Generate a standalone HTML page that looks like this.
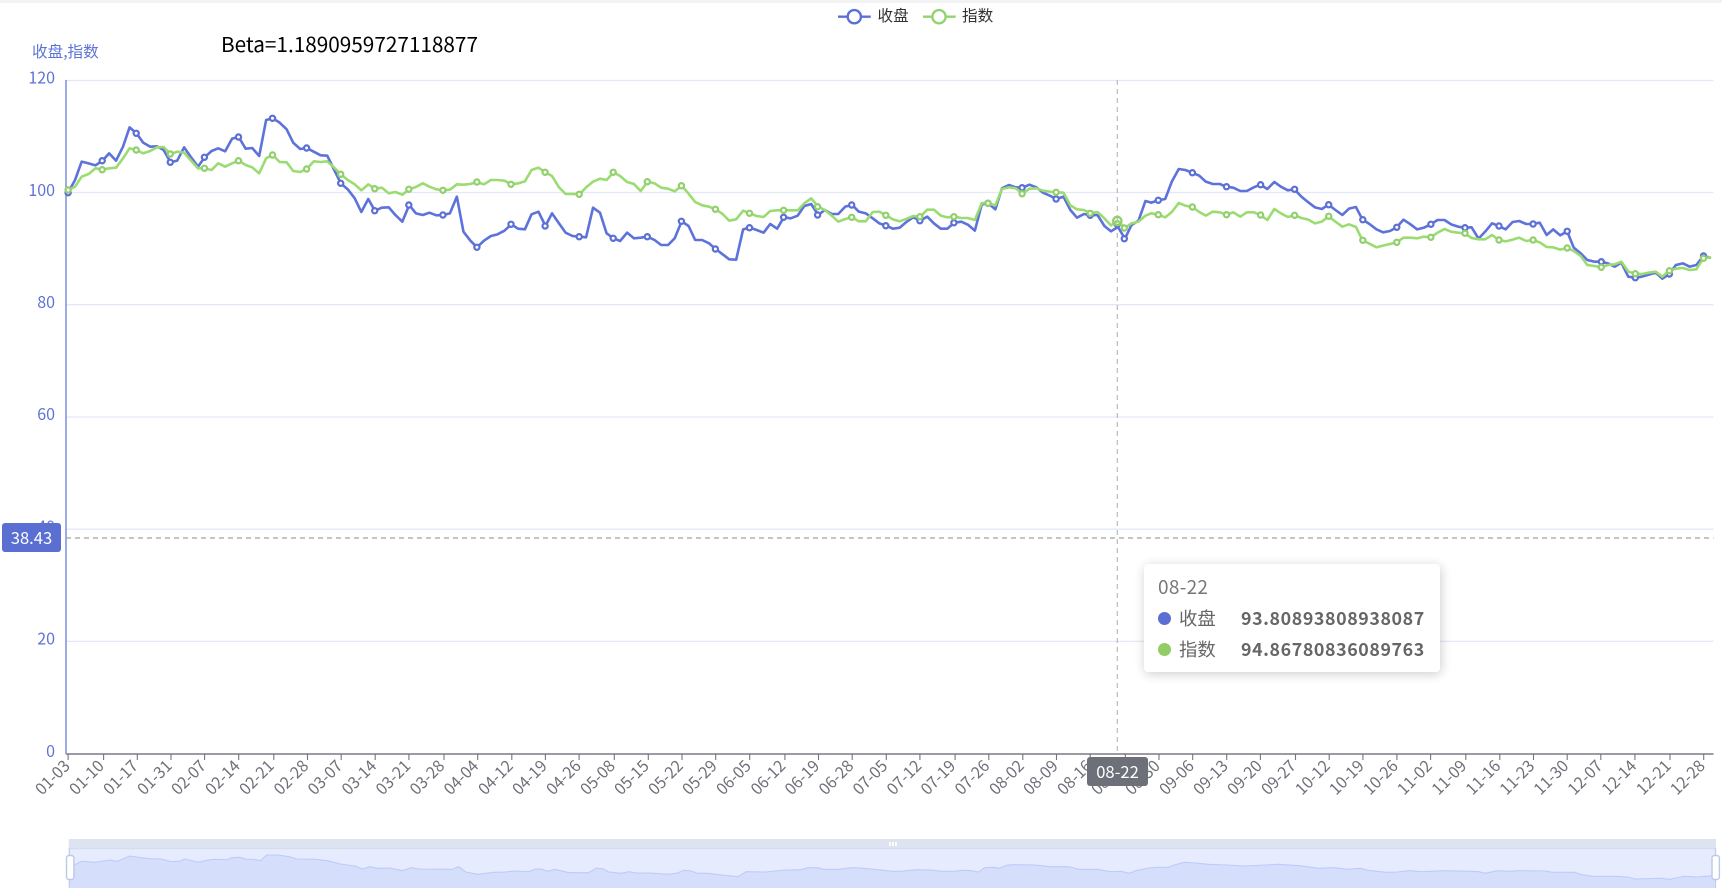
<!DOCTYPE html>
<html lang="zh">
<head>
<meta charset="utf-8">
<title>Beta</title>
<style>
html,body{margin:0;padding:0;background:#fff;}
body{width:1722px;height:888px;overflow:hidden;position:relative;font-family:"Liberation Sans","Noto Sans CJK SC",sans-serif;}
#w{position:absolute;left:0;top:0;width:1722px;height:888px;overflow:hidden;background:#fff;filter:blur(.35px);}
.n{font-family:"Noto Sans CJK SC","Liberation Sans",sans-serif;}
#top{position:absolute;left:0;top:0;width:1722px;height:3px;background:#f3f3f3;}
#beta{position:absolute;left:221px;top:28px;font-size:20.75px;line-height:30px;color:#000;white-space:nowrap;}
svg{position:absolute;left:0;top:0;}
text{font-family:"Noto Sans CJK SC","Liberation Sans",sans-serif;}
.ln{fill:none;stroke-width:2.6;stroke-linejoin:round;stroke-linecap:round;vector-effect:non-scaling-stroke;}
#tip{position:absolute;left:1144px;top:564px;width:296px;height:108px;background:#fff;border-radius:4px;box-shadow:1px 2px 11px rgba(0,0,0,.2);color:#666;}
#tip div{position:absolute;white-space:nowrap;}
.dot{width:13px;height:13px;border-radius:50%;left:14px;}
.nm{left:35px;font-size:18.4px;line-height:26px;}
.vl{left:97px;font-size:17.8px;line-height:26px;font-weight:700;color:#666;font-family:"Noto Sans CJK SC",sans-serif;letter-spacing:.6px;}
.box{position:absolute;color:#fff;text-align:center;font-size:16.6px;}
</style>
</head>
<body>
<div id="w">
<div id="top"></div>
<svg width="1722" height="888" viewBox="0 0 1722 888" xmlns="http://www.w3.org/2000/svg">
  <!-- grid -->
  <g stroke="#e3e8f7" stroke-width="1.3">
    <line x1="66" x2="1713.5" y1="80.5" y2="80.5"/>
    <line x1="66" x2="1713.5" y1="192.5" y2="192.5"/>
    <line x1="66" x2="1713.5" y1="304.7" y2="304.7"/>
    <line x1="66" x2="1713.5" y1="417" y2="417"/>
    <line x1="66" x2="1713.5" y1="529.2" y2="529.2"/>
    <line x1="66" x2="1713.5" y1="641.4" y2="641.4"/>
  </g>
  <!-- y labels -->
  <g fill="#5e73d6" font-size="16" text-anchor="end">
    <text x="55" y="83.6">120</text>
    <text x="55" y="195.8">100</text>
    <text x="55" y="308">80</text>
    <text x="55" y="420.2">60</text>
    <text x="55" y="532.4">40</text>
    <text x="55" y="644.6">20</text>
    <text x="55" y="756.8">0</text>
    <text x="32" y="57" text-anchor="start" font-size="15.6">收盘,指数</text>
  </g>
  <line x1="66" x2="66" y1="80" y2="754" stroke="#5e73d6" stroke-width="1.2"/>
  <!-- crosshair lines -->
  <line x1="1117.3" x2="1117.3" y1="80" y2="754" stroke="#b9b9c2" stroke-width="1.2" stroke-dasharray="5 4"/>
  <line x1="66" x2="1713.5" y1="538" y2="538" stroke="#a0a0a0" stroke-width="1.2" stroke-dasharray="5 4"/>

  <!-- blue line -->
  <g stroke="#5d72da">
    <polyline class="ln" transform="matrix(.36607 0 0 .33333 0 0)" points="186,578 205,540 223,485 242,490 261,496 280,482 298,460 317,482 336,440 354,382 373,400 391,428 410,440 429,439 447,450 466,487 484,482 503,442 522,472 541,500 559,472 578,453 596,445 615,454 634,416 652,411 671,446 689,444 708,468 727,360 745,355 764,368 783,388 801,428 820,447 838,444 857,455 876,466 894,467 913,510 931,550 950,568 969,595 987,636 1006,597 1024,632 1043,623 1062,622 1080,645 1099,665 1118,615 1136,640 1155,645 1173,638 1192,646 1210,645 1229,640 1248,590 1266,695 1285,722 1303,742 1322,722 1341,708 1359,703 1378,692 1397,673 1415,686 1434,688 1452,643 1471,635 1490,678 1508,640 1527,670 1545,698 1564,708 1583,710"/>
    <polyline class="ln" transform="matrix(.36607 0 0 .33333 574 0)" points="15,710 33,712 52,623 71,638 89,700 108,715 126,723 145,698 164,715 182,713 201,710 220,720 238,735 257,735 275,715 294,664 313,678 331,720 350,720 369,730 387,747 406,763 424,778 443,779 462,688 480,683 499,690 518,698 536,672 555,686 573,652 592,655 611,647 629,618 648,612 667,645 685,630 704,642 722,642 741,620 760,615 778,635 797,640 816,655 834,670 853,677 871,686 890,683 909,665 927,652 946,662 965,650 983,670 1002,686 1020,686 1039,668 1058,665 1076,674 1095,692 1114,613 1132,610 1151,628 1169,565 1188,555 1207,562 1225,563 1244,554 1263,562 1281,578 1300,587 1318,597 1337,590 1356,630 1374,653 1393,642 1412,646 1430,645 1449,678 1467,694 1486,681 1505,716 1523,675 1542,662 1561,603 1577,608"/>
    <polyline class="ln" transform="matrix(.36607 0 0 .33333 1148 0)" points="9,608 28,601 47,597 65,545 84,507 102,510 121,518 140,527 158,545 177,552 196,552 214,560 233,563 252,573 270,573 289,562 307,554 326,567 345,546 363,560 382,571 400,568 419,590 438,607 456,622 475,627 493,614 512,630 531,645 549,626 568,621 586,659 605,672 624,688 642,697 661,693 679,682 698,659 717,673 735,688 754,683 772,673 791,660 810,660 828,673 847,680 865,683 884,682 903,716 921,695 940,670 958,678 977,688 996,666 1014,663 1033,672 1051,672 1070,668 1089,705 1107,688 1126,706 1145,694 1163,743 1182,760 1200,780 1219,785 1238,785 1256,790 1275,800 1293,788 1312,830 1331,833 1349,830 1368,824 1387,818 1405,836 1424,822 1442,795 1461,790 1480,800 1498,795 1517,768 1535,773"/>
  </g>
  <!-- blue markers -->
  <g fill="#fff" stroke="#5b6fd4" stroke-width="2.2">
    <circle cx="68.1" cy="192.7" r="2.6"/><circle cx="102.2" cy="160.7" r="2.6"/><circle cx="136.2" cy="133.3" r="2.6"/><circle cx="170.3" cy="162.3" r="2.6"/><circle cx="204.4" cy="157.3" r="2.6"/><circle cx="238.5" cy="137" r="2.6"/><circle cx="272.5" cy="118.3" r="2.6"/><circle cx="306.6" cy="148" r="2.6"/><circle cx="340.7" cy="183.3" r="2.6"/><circle cx="374.7" cy="210.7" r="2.6"/><circle cx="408.8" cy="205" r="2.6"/><circle cx="442.9" cy="215" r="2.6"/><circle cx="476.9" cy="247.3" r="2.6"/><circle cx="511" cy="224.3" r="2.6"/><circle cx="545.1" cy="226" r="2.6"/><circle cx="579.2" cy="236.7" r="2.6"/><circle cx="613.2" cy="238.3" r="2.6"/><circle cx="647.3" cy="236.7" r="2.6"/><circle cx="681.4" cy="221.3" r="2.6"/><circle cx="715.4" cy="249" r="2.6"/><circle cx="749.5" cy="227.7" r="2.6"/><circle cx="783.6" cy="217.3" r="2.6"/><circle cx="817.6" cy="215" r="2.6"/><circle cx="851.7" cy="205" r="2.6"/><circle cx="885.8" cy="225.7" r="2.6"/><circle cx="919.9" cy="220.7" r="2.6"/><circle cx="953.9" cy="222.7" r="2.6"/><circle cx="988" cy="203.3" r="2.6"/><circle cx="1022.1" cy="187.7" r="2.6"/><circle cx="1056.1" cy="199" r="2.6"/><circle cx="1090.2" cy="215.3" r="2.6"/><circle cx="1124.3" cy="238.7" r="2.6"/><circle cx="1158.3" cy="200.3" r="2.6"/><circle cx="1192.4" cy="172.7" r="2.6"/><circle cx="1226.5" cy="186.7" r="2.6"/><circle cx="1260.6" cy="184.7" r="2.6"/><circle cx="1294.6" cy="189.3" r="2.6"/><circle cx="1328.7" cy="204.7" r="2.6"/><circle cx="1362.8" cy="219.7" r="2.6"/><circle cx="1396.8" cy="227.3" r="2.6"/><circle cx="1430.9" cy="224.3" r="2.6"/><circle cx="1465" cy="227.7" r="2.6"/><circle cx="1499" cy="226" r="2.6"/><circle cx="1533.1" cy="224" r="2.6"/><circle cx="1567.2" cy="231.3" r="2.6"/><circle cx="1601.3" cy="261.7" r="2.6"/><circle cx="1635.3" cy="277.7" r="2.6"/><circle cx="1669.4" cy="274" r="2.6"/><circle cx="1703.5" cy="256" r="2.6"/>
    <circle cx="1117.3" cy="224" r="2.8" fill="none"/>
  </g>

  <!-- green line -->
  <g stroke="#9bdc72">
    <polyline class="ln" transform="matrix(.36607 0 0 .33333 0 0)" points="186,570 205,560 223,530 242,522 261,505 280,509 298,505 317,503 336,475 354,445 373,450 391,460 410,453 429,442 447,441 466,462 484,455 503,458 522,482 541,505 559,505 578,510 596,490 615,500 634,490 652,482 671,495 689,502 708,520 727,475 745,465 764,486 783,487 801,513 820,516 838,507 857,484 876,486 894,484 913,503 931,523 950,540 969,553 987,571 1006,553 1024,566 1043,563 1062,580 1080,576 1099,584 1118,568 1136,561 1155,550 1173,560 1192,568 1210,571 1229,569 1248,553 1266,554 1285,552 1303,546 1322,553 1341,540 1359,540 1378,542 1397,553 1415,550 1434,544 1452,510 1471,503 1490,517 1508,528 1527,562 1545,582 1564,582 1583,583"/>
    <polyline class="ln" transform="matrix(.36607 0 0 .33333 574 0)" points="15,583 33,562 52,545 71,536 89,540 108,517 126,528 145,546 164,552 182,573 201,545 220,550 238,563 257,566 275,574 294,557 313,581 331,606 350,616 369,620 387,628 406,642 424,662 443,658 462,632 480,640 499,648 518,651 536,633 555,631 573,631 592,631 611,631 629,610 648,595 667,620 685,630 704,647 722,665 741,657 760,652 778,664 797,664 816,636 834,635 853,646 871,658 890,664 909,656 927,648 946,650 965,629 983,629 1002,647 1020,652 1039,650 1058,654 1076,654 1095,660 1114,609 1132,610 1151,616 1169,567 1188,562 1207,565 1225,581 1244,566 1263,565 1281,572 1300,575 1318,577 1337,578 1356,616 1374,628 1393,630 1412,640 1430,636 1449,655 1467,676 1486,663 1505,684 1523,670 1542,665 1561,647 1577,640"/>
    <polyline class="ln" transform="matrix(.36607 0 0 .33333 1148 0)" points="9,640 28,644 47,652 65,636 84,609 102,617 121,621 140,636 158,647 177,635 196,637 214,644 233,637 252,650 270,637 289,637 307,645 326,660 345,627 363,640 382,651 400,646 419,654 438,659 456,670 475,665 493,649 512,665 531,680 549,673 568,681 586,721 605,731 624,742 642,737 661,732 679,727 698,713 717,713 735,715 754,710 772,712 791,698 810,687 828,695 847,698 865,700 884,714 903,718 921,718 940,705 958,720 977,724 996,719 1014,713 1033,723 1051,720 1070,727 1089,741 1107,742 1126,749 1145,744 1163,753 1182,768 1200,795 1219,798 1238,802 1256,795 1275,793 1293,785 1312,815 1331,821 1349,822 1368,818 1387,815 1405,830 1424,812 1442,806 1461,804 1480,810 1498,808 1517,775 1535,772"/>
  </g>
  <!-- green markers -->
  <g fill="#fff" stroke="#91cf6e" stroke-width="2.2">
    <circle cx="68.1" cy="190" r="2.6"/><circle cx="102.2" cy="169.7" r="2.6"/><circle cx="136.2" cy="150" r="2.6"/><circle cx="170.3" cy="154" r="2.6"/><circle cx="204.4" cy="168.3" r="2.6"/><circle cx="238.5" cy="160.7" r="2.6"/><circle cx="272.5" cy="155" r="2.6"/><circle cx="306.6" cy="169" r="2.6"/><circle cx="340.7" cy="174.3" r="2.6"/><circle cx="374.7" cy="188.7" r="2.6"/><circle cx="408.8" cy="189.3" r="2.6"/><circle cx="442.9" cy="190.3" r="2.6"/><circle cx="476.9" cy="182" r="2.6"/><circle cx="511" cy="184.3" r="2.6"/><circle cx="545.1" cy="172.3" r="2.6"/><circle cx="579.2" cy="194.3" r="2.6"/><circle cx="613.2" cy="172.3" r="2.6"/><circle cx="647.3" cy="181.7" r="2.6"/><circle cx="681.4" cy="185.7" r="2.6"/><circle cx="715.4" cy="209.3" r="2.6"/><circle cx="749.5" cy="213.3" r="2.6"/><circle cx="783.6" cy="210.3" r="2.6"/><circle cx="817.6" cy="206.7" r="2.6"/><circle cx="851.7" cy="217.3" r="2.6"/><circle cx="885.8" cy="215.3" r="2.6"/><circle cx="919.9" cy="216.7" r="2.6"/><circle cx="953.9" cy="216.7" r="2.6"/><circle cx="988" cy="203.3" r="2.6"/><circle cx="1022.1" cy="193.7" r="2.6"/><circle cx="1056.1" cy="192.3" r="2.6"/><circle cx="1090.2" cy="213.3" r="2.6"/><circle cx="1124.3" cy="228" r="2.6"/><circle cx="1158.3" cy="214.7" r="2.6"/><circle cx="1192.4" cy="207" r="2.6"/><circle cx="1226.5" cy="214.7" r="2.6"/><circle cx="1260.6" cy="215" r="2.6"/><circle cx="1294.6" cy="215.3" r="2.6"/><circle cx="1328.7" cy="216.3" r="2.6"/><circle cx="1362.8" cy="240.3" r="2.6"/><circle cx="1396.8" cy="242.3" r="2.6"/><circle cx="1430.9" cy="237.3" r="2.6"/><circle cx="1465" cy="233.3" r="2.6"/><circle cx="1499" cy="240" r="2.6"/><circle cx="1533.1" cy="240" r="2.6"/><circle cx="1567.2" cy="248" r="2.6"/><circle cx="1601.3" cy="267.3" r="2.6"/><circle cx="1635.3" cy="273.7" r="2.6"/><circle cx="1669.4" cy="270.7" r="2.6"/><circle cx="1703.5" cy="258.3" r="2.6"/>
    <circle cx="1117.3" cy="221" r="4.2" fill="none" stroke-width="2.3"/>
  </g>

  <!-- x axis -->
  <line x1="66" x2="1713.5" y1="754" y2="754" stroke="#8e8c97" stroke-width="1.7"/>
  <path stroke="#75757e" stroke-width="1.1" fill="none" d="M68.1 754v6M103.6 754v6M137.3 754v6M171 754v6M204.6 754v6M238.7 754v6M273.8 754v6M307.5 754v6M341.2 754v6M375.2 754v6M408.9 754v6M444 754v6M477.7 754v6M511.8 754v6M545.4 754v6M579.1 754v6M614.3 754v6M648.3 754v6M682 754v6M715.7 754v6M749.7 754v6M784.9 754v6M818.5 754v6M852.2 754v6M886.3 754v6M919.9 754v6M955.1 754v6M988.8 754v6M1022.8 754v6M1056.5 754v6M1090.2 754v6M1125.3 754v6M1159 754v6M1192.7 754v6M1226.7 754v6M1260.4 754v6M1295.5 754v6M1329.2 754v6M1362.9 754v6M1396.9 754v6M1430.6 754v6M1465.8 754v6M1499.8 754v6M1533.5 754v6M1567.2 754v6M1600.8 754v6M1634.9 754v6M1670 754v6M1703.7 754v6"/>
  <g fill="#6e7079" font-size="15.9" text-anchor="end">
    <text transform="translate(71,767) rotate(-45)">01-03</text>
    <text transform="translate(105,767) rotate(-45)">01-10</text>
    <text transform="translate(139,767) rotate(-45)">01-17</text>
    <text transform="translate(173,767) rotate(-45)">01-31</text>
    <text transform="translate(207,767) rotate(-45)">02-07</text>
    <text transform="translate(241,767) rotate(-45)">02-14</text>
    <text transform="translate(275,767) rotate(-45)">02-21</text>
    <text transform="translate(309.5,767) rotate(-45)">02-28</text>
    <text transform="translate(343.5,767) rotate(-45)">03-07</text>
    <text transform="translate(377.5,767) rotate(-45)">03-14</text>
    <text transform="translate(411.5,767) rotate(-45)">03-21</text>
    <text transform="translate(445.5,767) rotate(-45)">03-28</text>
    <text transform="translate(479.5,767) rotate(-45)">04-04</text>
    <text transform="translate(514,767) rotate(-45)">04-12</text>
    <text transform="translate(548,767) rotate(-45)">04-19</text>
    <text transform="translate(582,767) rotate(-45)">04-26</text>
    <text transform="translate(616,767) rotate(-45)">05-08</text>
    <text transform="translate(650,767) rotate(-45)">05-15</text>
    <text transform="translate(684,767) rotate(-45)">05-22</text>
    <text transform="translate(718,767) rotate(-45)">05-29</text>
    <text transform="translate(752,767) rotate(-45)">06-05</text>
    <text transform="translate(786.5,767) rotate(-45)">06-12</text>
    <text transform="translate(820.5,767) rotate(-45)">06-19</text>
    <text transform="translate(854.5,767) rotate(-45)">06-28</text>
    <text transform="translate(888.5,767) rotate(-45)">07-05</text>
    <text transform="translate(922.5,767) rotate(-45)">07-12</text>
    <text transform="translate(956.5,767) rotate(-45)">07-19</text>
    <text transform="translate(990.5,767) rotate(-45)">07-26</text>
    <text transform="translate(1025,767) rotate(-45)">08-02</text>
    <text transform="translate(1059,767) rotate(-45)">08-09</text>
    <text transform="translate(1093,767) rotate(-45)">08-16</text>
    <text transform="translate(1127,767) rotate(-45)">08-23</text>
    <text transform="translate(1161,767) rotate(-45)">08-30</text>
    <text transform="translate(1195,767) rotate(-45)">09-06</text>
    <text transform="translate(1229,767) rotate(-45)">09-13</text>
    <text transform="translate(1263,767) rotate(-45)">09-20</text>
    <text transform="translate(1297,767) rotate(-45)">09-27</text>
    <text transform="translate(1331,767) rotate(-45)">10-12</text>
    <text transform="translate(1365,767) rotate(-45)">10-19</text>
    <text transform="translate(1399,767) rotate(-45)">10-26</text>
    <text transform="translate(1433,767) rotate(-45)">11-02</text>
    <text transform="translate(1467.5,767) rotate(-45)">11-09</text>
    <text transform="translate(1501.5,767) rotate(-45)">11-16</text>
    <text transform="translate(1535.5,767) rotate(-45)">11-23</text>
    <text transform="translate(1569.5,767) rotate(-45)">11-30</text>
    <text transform="translate(1603.5,767) rotate(-45)">12-07</text>
    <text transform="translate(1637.5,767) rotate(-45)">12-14</text>
    <text transform="translate(1672,767) rotate(-45)">12-21</text>
    <text transform="translate(1706,767) rotate(-45)">12-28</text>
  </g>

  <!-- legend -->
  <g fill="#fff" stroke-width="2.4">
    <line x1="838" x2="870.7" y1="16.7" y2="16.7" stroke="#5b6fd4"/>
    <circle cx="854.3" cy="16.7" r="6.6" stroke="#5b6fd4"/>
    <line x1="923" x2="955.7" y1="16.7" y2="16.7" stroke="#91d46e"/>
    <circle cx="939" cy="16.7" r="6.6" stroke="#91d46e"/>
  </g>
  <g fill="#333" font-size="15.6">
    <text x="877.5" y="21">收盘</text>
    <text x="962" y="21">指数</text>
  </g>

  <!-- data zoom -->
  <rect x="68.8" y="839" width="1647.2" height="49" fill="#e6ecfd"/>
  <rect x="68.8" y="839" width="1647.2" height="9.6" fill="#dee3f1"/>
  <line x1="68.8" x2="1716" y1="848.7" y2="848.7" stroke="#d3d9ea" stroke-width="1"/>
  <g fill="#d5dffc" stroke="none">
    <polygon transform="matrix(.36607 0 0 .33333 0 740)" points="190,444 190,378 202,375 223,364 262,367 300,360 320,364 355,348 385,353 410,356 440,357 468,365 490,364 505,357 542,367 560,362 582,358 620,359 635,353 655,352 672,358 692,358 712,362 728,345 760,345 790,350 810,357 860,358 895,362 930,372 970,378 990,387 1010,380 1030,385 1065,384 1100,392 1122,383 1145,387 1235,388 1253,380 1272,396 1305,403 1350,397 1380,396 1405,393 1445,395 1460,388 1478,387 1497,394 1515,388 1550,397 1570,398 1570,444"/>
    <polygon transform="matrix(.36607 0 0 .33333 574 740)" points="0,444 0,398 40,398 60,385 78,386 95,396 130,400 150,395 170,399 210,399 255,403 280,400 300,391 320,393 338,400 365,400 410,406 448,410 470,395 520,396 580,390 620,389 640,383 665,383 680,388 725,388 760,383 780,384 820,388 870,394 895,394 935,389 975,390 1005,394 1040,394 1060,391 1085,392 1105,396 1122,383 1145,382 1162,385 1180,376 1200,374 1262,375 1300,380 1350,380 1380,388 1430,388 1465,395 1495,394 1515,400 1535,392 1570,384 1570,444"/>
    <polygon transform="matrix(.36607 0 0 .33333 1148 740)" points="0,444 0,384 25,382 55,382 75,374 100,367 130,369 165,373 215,375 260,378 320,375 355,373 415,377 465,385 510,383 545,388 580,385 600,391 650,397 680,396 715,392 750,395 810,392 880,394 905,395 920,400 955,392 990,394 1015,392 1085,393 1105,397 1165,397 1185,404 1215,409 1270,409 1310,411 1330,417 1400,415 1425,418 1465,409 1500,411 1548,407 1548,444"/>
  </g>
  <g fill="none" stroke="#bccbfa" stroke-width="1.1" stroke-linejoin="round">
    <polyline vector-effect="non-scaling-stroke" transform="matrix(.36607 0 0 .33333 0 740)" points="190,378 202,375 223,364 262,367 300,360 320,364 355,348 385,353 410,356 440,357 468,365 490,364 505,357 542,367 560,362 582,358 620,359 635,353 655,352 672,358 692,358 712,362 728,345 760,345 790,350 810,357 860,358 895,362 930,372 970,378 990,387 1010,380 1030,385 1065,384 1100,392 1122,383 1145,387 1235,388 1253,380 1272,396 1305,403 1350,397 1380,396 1405,393 1445,395 1460,388 1478,387 1497,394 1515,388 1550,397 1570,398"/>
    <polyline vector-effect="non-scaling-stroke" transform="matrix(.36607 0 0 .33333 574 740)" points="0,398 40,398 60,385 78,386 95,396 130,400 150,395 170,399 210,399 255,403 280,400 300,391 320,393 338,400 365,400 410,406 448,410 470,395 520,396 580,390 620,389 640,383 665,383 680,388 725,388 760,383 780,384 820,388 870,394 895,394 935,389 975,390 1005,394 1040,394 1060,391 1085,392 1105,396 1122,383 1145,382 1162,385 1180,376 1200,374 1262,375 1300,380 1350,380 1380,388 1430,388 1465,395 1495,394 1515,400 1535,392 1570,384"/>
    <polyline vector-effect="non-scaling-stroke" transform="matrix(.36607 0 0 .33333 1148 740)" points="0,384 25,382 55,382 75,374 100,367 130,369 165,373 215,375 260,378 320,375 355,373 415,377 465,385 510,383 545,388 580,385 600,391 650,397 680,396 715,392 750,395 810,392 880,394 905,395 920,400 955,392 990,394 1015,392 1085,393 1105,397 1165,397 1185,404 1215,409 1270,409 1310,411 1330,417 1400,415 1425,418 1465,409 1500,411 1548,407"/>
  </g>
  <line x1="69.3" x2="69.3" y1="848" y2="888" stroke="#c3cdea" stroke-width="1.2"/>
  <line x1="1715.5" x2="1715.5" y1="848" y2="888" stroke="#c3cdea" stroke-width="1.2"/>
  <rect x="66.5" y="855.5" width="7.4" height="24" rx="2.5" fill="#fff" stroke="#bcc8e8" stroke-width="1.4"/>
  <rect x="1712" y="855.5" width="7.4" height="24" rx="2.5" fill="#fff" stroke="#bcc8e8" stroke-width="1.4"/>
  <g fill="#fff"><rect x="889" y="842" width="1.8" height="4"/><rect x="892" y="842" width="1.8" height="4"/><rect x="895" y="842" width="1.8" height="4"/></g>
</svg>

<div id="beta" class="n">Beta=1.1890959727118877</div>

<div class="box n" style="left:2px;top:523px;width:59px;height:29px;line-height:28px;background:#5b6fd2;border-radius:3px;">38.43</div>
<div class="box n" style="left:1087px;top:757px;width:61px;height:29px;line-height:28px;background:#6e7079;border-radius:3px;">08-22</div>

<div id="tip" class="n">
  <div class="n" style="left:14px;top:9px;font-size:19px;line-height:28px;color:#777;letter-spacing:.3px;">08-22</div>
  <div class="dot" style="top:48px;background:#5b6fd2;"></div>
  <div class="nm n" style="top:41px;">收盘</div>
  <div class="vl" style="top:41px;">93.80893808938087</div>
  <div class="dot" style="top:79px;background:#91cc66;"></div>
  <div class="nm n" style="top:72px;">指数</div>
  <div class="vl" style="top:72px;">94.86780836089763</div>
</div>
</div>
</body>
</html>
